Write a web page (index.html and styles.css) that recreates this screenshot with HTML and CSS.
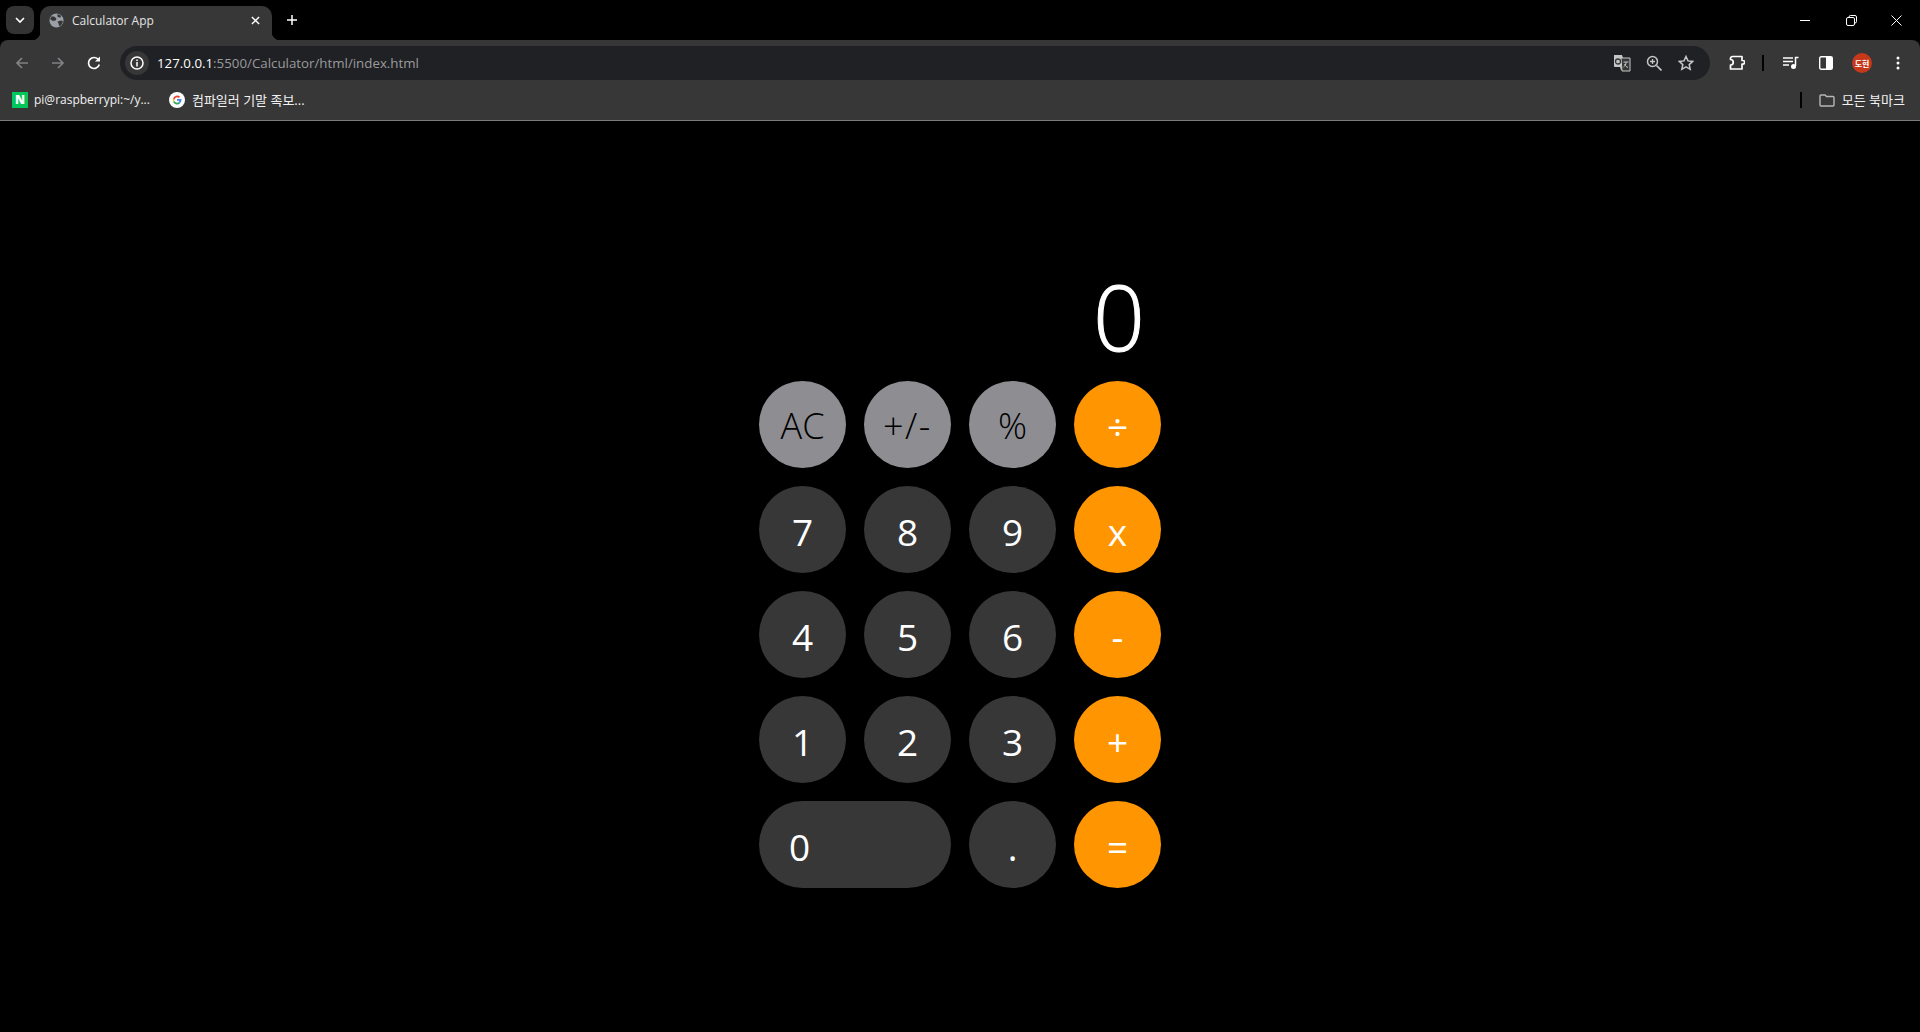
FILE: index.html
```html
<!DOCTYPE html>
<html lang="en">
<head>
  <meta charset="UTF-8">
  <title>Calculator App</title>
  <link rel="stylesheet" href="styles.css">
</head>
<body>
  <div class="browser">
    <div class="tabstrip">
      <div class="tab-search">
        <svg width="12" height="12" viewBox="0 0 12 12"><path d="M2 4l4 4 4-4" fill="none" stroke="#fff" stroke-width="1.6"/></svg>
      </div>
      <div class="tab">
        <svg class="tab-globe" width="15" height="15" viewBox="0 0 16 16"><circle cx="8" cy="8" r="7.5" fill="#9aa0a6"/><path d="M3 3.500l3 .5 2 2-1 2-3 .5-3-2zM9 1l4 2-1 2-3-1zM9 9l4-1 2 1-2 4-2 1-1-3z" fill="#373737"/></svg>
        <span class="tab-title">Calculator App</span>
        <svg class="tab-close" width="9" height="9" viewBox="0 0 10 10"><path d="M1 1l8 8M9 1l-8 8" stroke="#fff" stroke-width="1.6"/></svg>
      </div>
      <svg class="tab-new" width="12" height="12" viewBox="0 0 12 12"><path d="M6 1v10M1 6h10" stroke="#fff" stroke-width="1.5"/></svg>
      <div class="win-controls">
        <svg width="11" height="11" viewBox="0 0 11 11"><path d="M0 5.500h10" stroke="#fff"/></svg>
        <svg width="11" height="11" viewBox="0 0 11 11"><rect x=".5" y="2.500" width="8" height="8" rx="1.500" fill="none" stroke="#fff"/><path d="M3 2.500v-.5a1.500 1.500 0 0 1 1.500-1.500h4.500a1.500 1.500 0 0 1 1.500 1.500v4.500a1.500 1.500 0 0 1-1.500 1.500" fill="none" stroke="#fff"/></svg>
        <svg width="11" height="11" viewBox="0 0 11 11"><path d="M.5.5l10 10M10.500.5l-10 10" stroke="#fff"/></svg>
      </div>
    </div>

    <div class="toolbar">
      <svg class="nav-icon" width="16" height="16" viewBox="0 0 16 16"><path d="M14 8H3M8 3L3 8l5 5" fill="none" stroke="#7f8184" stroke-width="1.700"/></svg>
      <svg class="nav-icon" width="16" height="16" viewBox="0 0 16 16"><path d="M2 8h11M8 3l5 5-5 5" fill="none" stroke="#7f8184" stroke-width="1.700"/></svg>
      <svg class="nav-icon" width="16" height="16" viewBox="0 0 16 16"><path d="M13.300 9.500a5.500 5.500 0 1 1-.8-4.700" fill="none" stroke="#fff" stroke-width="1.700"/><path d="M14 1.500v5h-5z" fill="#fff"/></svg>
      <div class="omnibox">
        <div class="site-info">
          <svg width="14" height="14" viewBox="0 0 14 14"><circle cx="7" cy="7" r="6" fill="none" stroke="#fff" stroke-width="1.500"/><path d="M7 6v4.500M7 3.500v1.500" stroke="#fff" stroke-width="1.500"/></svg>
        </div>
        <div class="url"><span class="url-host">127.0.0.1</span>:5500/Calculator/html/index.html</div>
        <svg class="omni-icon" width="18" height="18" viewBox="0 0 18 18"><path d="M1 1h8l1 3h6a1 1 0 0 1 1 1v11H8l-1-3H2a1 1 0 0 1-1-1z" fill="#c4c7c5"/><path d="M8 4h9v13H9z" fill="#373737" stroke="#c4c7c5"/><circle cx="5" cy="7.500" r="2.500" fill="none" stroke="#373737" stroke-width="1.300"/><path d="M10.500 8h5M13 8c0 3-1 4-2.500 5M11.500 10c1 2 2 3 3.500 3.500" fill="none" stroke="#c4c7c5"/></svg>
        <svg class="omni-icon" width="16" height="16" viewBox="0 0 16 16"><circle cx="6.500" cy="6.500" r="5" fill="none" stroke="#c4c7c5" stroke-width="1.500"/><path d="M10.500 10.500l5 5" stroke="#c4c7c5" stroke-width="1.700"/><path d="M6.500 4v5M4 6.500h5" stroke="#c4c7c5" stroke-width="1.300"/></svg>
        <svg class="omni-icon omni-star" width="16" height="16" viewBox="0 0 16 16"><path d="M8 1.500l2 4.400 4.800.5-3.600 3.200 1 4.700L8 11.900l-4.200 2.400 1-4.700L1.200 6.400 6 5.900z" fill="none" stroke="#c4c7c5" stroke-width="1.500"/></svg>
      </div>
      <div class="toolbar-actions">
        <svg width="16" height="16" viewBox="0 0 16 16"><path d="M3.500 1.500H13V5.500h.8a1.800 1.800 0 0 1 0 3.600H13V14H1.500V10a2.700 2.700 0 0 0 0-5.500V3.500a2 2 0 0 1 2-2z" fill="none" stroke="#fff" stroke-width="1.700" stroke-linejoin="round"/></svg>
        <span class="sep sep-toolbar"></span>
        <svg class="media-icon" width="16" height="14" viewBox="0 0 16 14"><path d="M0 2h10M0 5.500h10M0 9h6" stroke="#fff" stroke-width="1.500"/><path d="M12.500 10V1.500H15.500" fill="none" stroke="#fff" stroke-width="1.500"/><circle cx="10.500" cy="10.500" r="2.500" fill="#fff"/></svg>
        <svg class="panel-icon" width="14" height="14" viewBox="0 0 14 14"><rect x=".7" y=".7" width="12.600" height="12.600" rx="1.500" fill="none" stroke="#fff" stroke-width="1.400"/><rect x="7" y="1" width="6" height="12" fill="#fff"/></svg>
        <span class="avatar">도현</span>
        <svg class="menu-icon" width="4" height="14" viewBox="0 0 4 14"><circle cx="2" cy="2" r="1.500" fill="#fff"/><circle cx="2" cy="7" r="1.500" fill="#fff"/><circle cx="2" cy="12" r="1.500" fill="#fff"/></svg>
      </div>
    </div>

    <div class="bookmarks">
      <div class="bookmark">
        <span class="naver-icon">N</span>
        <span>pi@raspberrypi:~/y...</span>
      </div>
      <div class="bookmark bookmark-ko">
        <svg width="16" height="16" viewBox="0 0 16 16"><circle cx="8" cy="8" r="8" fill="#fff"/><path d="M8 5.300a2.700 2.700 0 0 1 1.800.7l1.300-1.300A4.500 4.500 0 0 0 4 6.500l1.500 1.200A2.700 2.700 0 0 1 8 5.300z" fill="#ea4335"/><path d="M5.500 7.700L4 6.500a4.500 4.500 0 0 0 0 3l1.500-1.200a2.700 2.700 0 0 1 0-.6z" fill="#fbbc05"/><path d="M8 10.700a2.700 2.700 0 0 1-2.500-1.800L4 10.100a4.500 4.500 0 0 0 7 1.300l-1.500-1.200a2.700 2.700 0 0 1-1.500.5z" fill="#34a853"/><path d="M12.400 7H8v1.800h2.500a2.200 2.200 0 0 1-1 1.400l1.500 1.200a4.500 4.500 0 0 0 1.400-4.400z" fill="#4285f4"/></svg>
        <span>컴파일러 기말 족보...</span>
      </div>
      <span class="sep sep-bookmarks"></span>
      <div class="bookmark bookmark-ko all-bookmarks">
        <svg width="16" height="14" viewBox="0 0 16 14"><path d="M1 3a1 1 0 0 1 1-1h4l1.500 1.500H14a1 1 0 0 1 1 1V12a1 1 0 0 1-1 1H2a1 1 0 0 1-1-1z" fill="none" stroke="#b5b7b9" stroke-width="1.400"/></svg>
        <span>모든 북마크</span>
      </div>
    </div>
  </div>

  <main class="page">
    <div class="calculator">
      <div class="display">0</div>
      <div class="keys">
        <button class="key key-fn">AC</button>
        <button class="key key-fn key-sign">+/-</button>
        <button class="key key-fn">%</button>
        <button class="key key-op">÷</button>
        <button class="key">7</button>
        <button class="key">8</button>
        <button class="key">9</button>
        <button class="key key-op">x</button>
        <button class="key">4</button>
        <button class="key">5</button>
        <button class="key">6</button>
        <button class="key key-op">-</button>
        <button class="key">1</button>
        <button class="key">2</button>
        <button class="key">3</button>
        <button class="key key-op">+</button>
        <button class="key key-zero">0</button>
        <button class="key">.</button>
        <button class="key key-op">=</button>
      </div>
    </div>
  </main>
</body>
</html>
```

FILE: styles.css
```css
* { box-sizing: border-box; }
html, body { height: 100%; }
body { margin: 0; background: #000; color: #fff; font-family: "Open Sans", "Noto Sans CJK KR", sans-serif; display: flex; flex-direction: column; overflow: hidden; }
svg { display: block; flex: none; }

/* browser chrome */
.browser { flex: none; font-size: 12px; }
.tabstrip { height: 40px; display: flex; align-items: flex-start; padding: 6px 0 0 6px; }
.tab-search { width: 28px; height: 28px; border-radius: 8px; background: #333; display: flex; align-items: center; justify-content: center; }
.tab { position: relative; width: 232px; height: 34px; margin-left: 6px; padding: 0 12px 5px 9px; background: #373737; border-radius: 10px 10px 0 0; display: flex; align-items: center; }
.tab::before, .tab::after { content: ""; position: absolute; bottom: 0; width: 8px; height: 8px; }
.tab::before { left: -8px; background: radial-gradient(circle at 0 0, transparent 8px, #373737 8.5px); }
.tab::after { right: -8px; background: radial-gradient(circle at 100% 0, transparent 8px, #373737 8.5px); }
.tab-title { margin-left: 8px; flex: 1; color: #e3e3e3; }
.tab-new { margin: 8px 0 0 14px; }
.win-controls { margin-left: auto; margin-top: 9px; width: 120px; padding-right: 18px; display: flex; justify-content: space-between; }

.toolbar { height: 46px; background: #373737; border-radius: 8px 8px 0 0; padding-left: 14px; display: flex; align-items: center; }
.nav-icon { margin-right: 20px; }
.omnibox { width: 1590px; height: 34px; margin-left: -2px; background: #202124; border-radius: 17px; padding: 0 16px 0 5px; display: flex; align-items: center; }
.site-info { width: 24px; height: 24px; border-radius: 50%; background: #373737; display: flex; align-items: center; justify-content: center; }
.url { margin-left: 8px; flex: 1; font-size: 13.300px; color: #9a9b9d; }
.url-host { color: #fff; }
.omni-icon { margin-left: 15px; }
.omni-star { margin-left: 16px; }
.toolbar-actions { flex: 1; display: flex; align-items: center; padding-left: 19px; }
.sep { width: 2px; height: 16px; background: #000; }
.sep-toolbar { margin-left: 17px; }
.media-icon { margin-left: 19px; }
.panel-icon { margin-left: 20px; }
.avatar { width: 20px; height: 20px; margin-left: 19px; border-radius: 50%; background: #c5391a; color: #fff; font-size: 8px; font-weight: 700; display: flex; align-items: center; justify-content: center; }
.menu-icon { margin-left: 24px; }

.bookmarks { height: 35px; background: #373737; border-bottom: 1px solid #7b7b7b; padding: 0 15px 7px 12px; display: flex; align-items: center; }
.bookmark { display: flex; align-items: center; gap: 6px; color: #f1f1f1; margin-right: 19px; white-space: nowrap; }
.bookmark-ko { font-size: 13px; gap: 7px; }
.naver-icon { width: 16px; height: 16px; background: #03c75a; color: #fff; font-size: 12px; font-weight: 800; display: flex; align-items: center; justify-content: center; }
.sep-bookmarks { margin-left: auto; margin-right: 17px; }
.all-bookmarks { margin-right: 0; }

/* calculator */
.page { flex: 1; display: flex; align-items: center; justify-content: center; }
.calculator { width: 402px; }
.display { height: 116px; padding-right: 16px; text-align: right; font-size: 91px; font-weight: 300; line-height: 103px; -webkit-text-stroke: 1px #fff; }
.keys { display: grid; grid-template-columns: repeat(4, 87px); grid-auto-rows: 87px; gap: 18px; }
.key { border: 0; padding: 3px 0 0; border-radius: 50%; background: #373737; color: #fff; font-family: inherit; font-size: 37px; line-height: 1; }
.key-fn { background: #8e8d92; color: #000; font-size: 36px; font-weight: 300; }
.key-sign { letter-spacing: 1.500px; }
.key-op { background: #ff9500; }
.key-zero { grid-column: span 2; border-radius: 44px; text-align: left; padding-left: 30px; }
```
